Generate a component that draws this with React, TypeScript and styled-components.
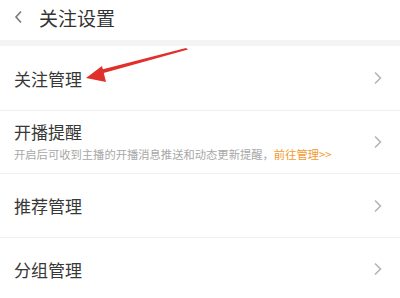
import styled, { createGlobalStyle } from 'styled-components';

const GlobalStyle = createGlobalStyle`
  html, body {
    margin: 0;
    padding: 0;
    background: #ffffff;
  }
  body {
    font-family: "Noto Sans CJK SC", "Noto Sans", sans-serif;
    color: #333333;
  }
`;

const Page = styled.div`
  position: relative;
  width: 400px;
  height: 298px;
  overflow: hidden;
  background: #ffffff;
`;

const Header = styled.header`
  height: 40px;
  display: flex;
  align-items: center;
  padding-left: 13px;
  gap: 14px;
`;

const Title = styled.h1`
  margin: 0;
  font-size: 19px;
  font-weight: 400;
  color: #333333;
  line-height: 1;
  padding-bottom: 6px;
`;

const BackIcon = styled.svg`
  width: 12px;
  height: 14px;
  margin-bottom: 6px;
`;

const Band = styled.div`
  height: 6px;
  background: #f4f4f4;
`;

const List = styled.ul`
  list-style: none;
  margin: 0;
  padding: 0;
`;

const Row = styled.li<{ $height: number }>`
  height: ${(p) => p.$height}px;
  display: flex;
  align-items: center;
  padding: 0 14px;
  border-bottom: 1px solid #efefef;
`;

const RowBody = styled.div`
  flex: 1;
  display: flex;
  flex-direction: column;
  gap: 9px;
`;

const RowTitle = styled.span`
  font-size: 17px;
  line-height: 1;
  color: #383838;
`;

const RowHint = styled.span`
  font-size: 11.3px;
  line-height: 1;
  color: #a8a8a8;
  white-space: nowrap;
`;

const Link = styled.span`
  color: #f29a2e;
`;

const Chevron = styled.svg`
  width: 9px;
  height: 14px;
  margin-right: 4px;
`;

const Pointer = styled.svg`
  position: absolute;
  left: 80px;
  top: 44px;
  width: 112px;
  height: 44px;
`;

function Arrow() {
  return (
    <Chevron viewBox="0 0 9 14">
      <path d="M2 1.5 L7.5 7 L2 12.5" fill="none" stroke="#b5b5b5" strokeWidth="1.6" />
    </Chevron>
  );
}

const rows = [
  { title: '关注管理', height: 64 },
  { title: '开播提醒', height: 62, hint: true },
  { title: '推荐管理', height: 63 },
  { title: '分组管理', height: 62 },
];

export default function App() {
  return (
    <>
      <GlobalStyle />
      <Page>
        <Header>
          <BackIcon viewBox="0 0 12 14">
            <path d="M8 1.5 L3 7 L8 12.5" fill="none" stroke="#777777" strokeWidth="1.6" />
          </BackIcon>
          <Title>关注设置</Title>
        </Header>
        <Band />
        <List>
          {rows.map((r) => (
            <Row key={r.title} $height={r.height}>
              <RowBody>
                <RowTitle>{r.title}</RowTitle>
                {r.hint && (
                  <RowHint>
                    开启后可收到主播的开播消息推送和动态更新提醒，<Link>前往管理&gt;&gt;</Link>
                  </RowHint>
                )}
              </RowBody>
              <Arrow />
            </Row>
          ))}
        </List>
        <Pointer viewBox="0 0 112 44">
          <polygon points="106,4 108,5.5 20,30 18,26.5" fill="#e0302a" />
          <polygon points="6,34 22,22 26,38" fill="#e0302a" />
        </Pointer>
      </Page>
    </>
  );
}
